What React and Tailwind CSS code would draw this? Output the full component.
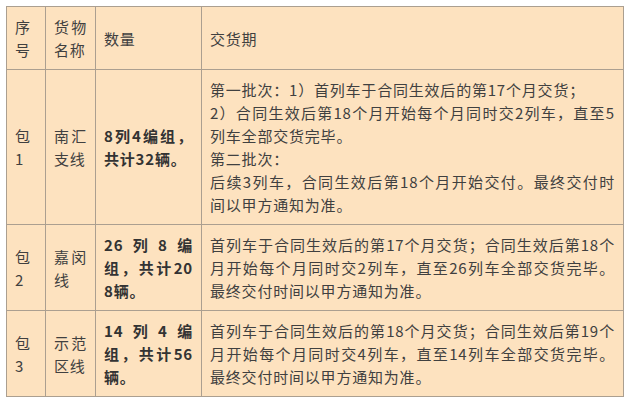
import React from "react";

const font = { fontFamily: '"Noto Sans CJK SC", "Noto Sans", sans-serif' };

function Cell({ children, bold }) {
  return (
    <div className="flex items-center border-r border-b border-[#ab9f90] px-2 py-2">
      <div
        className={`w-full text-justify break-all text-[15px] leading-[23px] tracking-[0.8px] ${
          bold ? "font-bold text-[#333333]" : "text-[#404040]"
        }`}
      >
        {children}
      </div>
    </div>
  );
}

export default function App() {
  return (
    <div className="w-[630px] h-[401px] bg-white pt-[6px] pl-[6px]" style={font}>
      <div className="grid grid-cols-[39px_50px_106px_422px] w-[618px] border-l border-t border-[#ab9f90] bg-[#fde2bf]">
        <Cell>序号</Cell>
        <Cell>货物名称</Cell>
        <Cell>数量</Cell>
        <Cell>交货期</Cell>

        <Cell>包1</Cell>
        <Cell>南汇支线</Cell>
        <Cell bold>8列4编组，共计32辆。</Cell>
        <Cell>
          <p>第一批次：1）首列车于合同生效后的第17个月交货；</p>
          <p>2）合同生效后第18个月开始每个月同时交2列车，直至5列车全部交货完毕。</p>
          <p>第二批次：</p>
          <p>后续3列车，合同生效后第18个月开始交付。最终交付时间以甲方通知为准。</p>
        </Cell>

        <Cell>包2</Cell>
        <Cell>嘉闵线</Cell>
        <Cell bold>26列8编组，共计208辆。</Cell>
        <Cell>首列车于合同生效后的第17个月交货；合同生效后第18个月开始每个月同时交2列车，直至26列车全部交货完毕。最终交付时间以甲方通知为准。</Cell>

        <Cell>包3</Cell>
        <Cell>示范区线</Cell>
        <Cell bold>14列4编组，共计56辆。</Cell>
        <Cell>首列车于合同生效后的第18个月交货；合同生效后第19个月开始每个月同时交4列车，直至14列车全部交货完毕。最终交付时间以甲方通知为准。</Cell>
      </div>
    </div>
  );
}
